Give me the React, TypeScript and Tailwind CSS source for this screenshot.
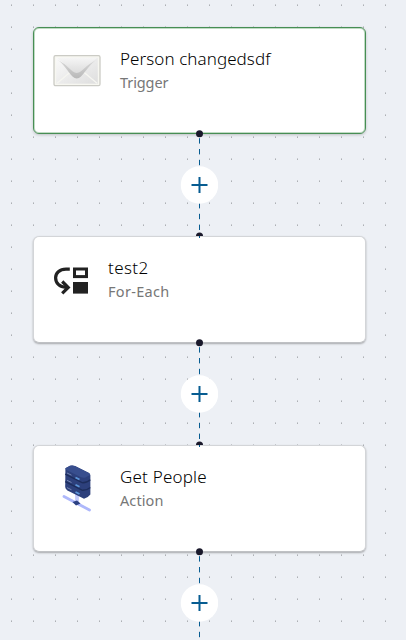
import type { ReactNode } from 'react';

function Envelope() {
  return (
    <svg width="48" height="48" viewBox="0 0 48 48" className="shrink-0">
      <defs>
        <linearGradient id="paper" x1="0" y1="0" x2="1" y2="1">
          <stop offset="0" stopColor="#fafafa" />
          <stop offset="1" stopColor="#dedede" />
        </linearGradient>
        <linearGradient id="flap" x1="0" y1="0" x2="0" y2="1">
          <stop offset="0" stopColor="#f5f5f5" />
          <stop offset="1" stopColor="#dcdcdc" />
        </linearGradient>
        <linearGradient id="shade" x1="0" y1="0" x2="0" y2="1">
          <stop offset="0" stopColor="#dadada" />
          <stop offset="1" stopColor="#b8b8b8" />
        </linearGradient>
      </defs>
      <rect x="1" y="8.7" width="46" height="30" rx="1.5" fill="#f7f7f1" stroke="#cbcbc5" strokeWidth="1.3" />
      <rect x="3.2" y="10.7" width="41.6" height="26" fill="url(#paper)" />
      <path d="M4 36.2L18 24.5M44 36.2L30 24.5" stroke="#f6f6f1" strokeWidth="1.4" />
      <path d="M4 12.5C11 17 14.5 24 19.5 29.5Q23.8 33.5 28 29.5C33 24 37 17 44 12.5L28 22H20Z" fill="url(#shade)" />
      <path d="M4 11H44C38 15 33 20 28 24.2Q23.8 27.7 19.5 24.2C14.5 20 10 15 4 11Z" fill="url(#flap)" />
    </svg>
  );
}

function LoopIcon() {
  return (
    <svg width="36" height="36" viewBox="0 0 36 36" fill="none" stroke="#222" className="shrink-0">
      <path d="M16.8 7.2H13C6.4 7.2 2.6 11 2.6 15.8C2.6 21 6.4 25.1 13 25.4" strokeWidth="3.2" />
      <path d="M9.2 19.5L15.2 25.4L9.2 31.3" strokeWidth="3.2" />
      <rect x="21.5" y="7" width="12" height="7.6" strokeWidth="3" />
      <rect x="20" y="20" width="15" height="11.6" fill="#222" stroke="none" />
    </svg>
  );
}

function ServerIcon() {
  return (
    <svg width="48" height="48" viewBox="0 0 48 48" className="shrink-0">
      <path d="M11 31.5L36.5 45" stroke="#aeb8fb" strokeWidth="2.8" strokeLinecap="round" />
      <path d="M24 29V38" stroke="#c4cbfb" strokeWidth="3.8" />
      <path d="M19.5 37L24 35.5L27.5 38.5L23 40.5Z" fill="#2c4182" />
      <path d="M12.4 3.2L17 .8Q19.3 0 22 1L36 8Q37.4 9 37.4 10.5V29.5Q35 32.8 31 33.7L14.4 25.4Q12.2 24 12.2 22Z" fill="#2d407c" />
      <path d="M12.4 3.2L17 .8Q19.3 0 22 1L36 8Q37.4 9 37 10L32.5 12.5Q30 13.3 27.5 12L13 4.8Z" fill="#384e8e" />
      <path d="M12.3 9.2L29 17.7Q34 18 37.3 14.8M12.3 16.7L29 25.2Q34 25.5 37.3 22.5" fill="none" stroke="#1d2d5c" strokeWidth="1.3" />
      <path d="M14 8L18.5 10.2M14 15.3L18.5 17.5M14 22.6L18.5 24.8" stroke="#7484b0" strokeWidth="1" />
      <path d="M22.5 12.5L26.5 14.5M22.5 19.8L26.5 21.8M22.5 27.1L26.5 29.1" stroke="#5d97da" strokeWidth="1.7" />
    </svg>
  );
}

interface StepProps {
  icon: ReactNode;
  title: string;
  kind: string;
  titleClass: string;
  kindClass: string;
  trigger?: boolean;
}

function Step({ icon, title, kind, titleClass, kindClass, trigger }: StepProps) {
  const frame = trigger
    ? 'border-[#478e54] shadow-[inset_0_0_0_1px_#c0dbc4,0_1px_3px_rgba(0,0,0,0.2)]'
    : 'border-[#d3d5d8] border-b-[#bfc1c4] shadow-[0_1px_2px_rgba(0,0,0,0.3)]';
  return (
    <div className={`h-[107px] w-[333px] shrink-0 rounded-md border bg-white pt-[19px] pl-[19px] ${frame}`}>
      <div className="flex h-12 items-start gap-[19px]">
        <div className="flex h-12 items-center">{icon}</div>
        <div className="flex flex-col">
          <div className={`h-[23px] text-[17px] leading-6 font-light whitespace-nowrap text-black ${titleClass}`}>{title}</div>
          <div className={`h-6 text-[14.5px] leading-6 font-normal whitespace-nowrap text-[#777] ${kindClass}`}>{kind}</div>
        </div>
      </div>
    </div>
  );
}

function Connector({ last }: { last?: boolean }) {
  return (
    <div className="relative flex h-[102px] w-[333px] shrink-0 items-center justify-center">
      <svg width="38" height="110" viewBox="0 0 38 110" className="absolute top-[-4px] left-[147px]">
        <path d="M19.5 8V108" stroke="#075c91" strokeWidth="1" strokeDasharray="5.4 5.4" strokeDashoffset="-0.2" />
        <circle cx="19.5" cy="3.7" r="3.5" fill="#1a192b" />
        {!last && <path d="M16 106A3.5 3.5 0 0 1 23 106Z" fill="#1a192b" />}
        <circle cx="19.5" cy="55" r="18.7" fill="#fff" />
        <path d="M11.5 55H27.5M19.5 47V63" stroke="#075c91" strokeWidth="2" />
      </svg>
    </div>
  );
}

export default function App() {
  return (
    <main className="relative h-[640px] w-[406px] overflow-hidden bg-[#edf0f5] font-['Noto_Sans','Open_Sans',sans-serif]">
      <svg width="406" height="640" className="absolute inset-0">
        <defs>
          <pattern id="dots" width="22" height="22" patternUnits="userSpaceOnUse">
            <rect x="11" y="4" width="1" height="1" fill="#c7cacf" />
            <rect x="11" y="5" width="1" height="1" fill="#adb0b4" />
          </pattern>
        </defs>
        <rect width="406" height="640" fill="url(#dots)" />
      </svg>
      <div className="relative flex flex-col items-start pt-[27px] pl-[33px]">
        <Step icon={<Envelope />} title="Person changedsdf" kind="Trigger" titleClass="tracking-[0.07px]" kindClass="tracking-[-0.1px]" trigger />
        <Connector />
        <Step icon={<LoopIcon />} title="test2" kind="For-Each" titleClass="tracking-[0.4px]" kindClass="tracking-[0.3px]" />
        <Connector />
        <Step icon={<ServerIcon />} title="Get People" kind="Action" titleClass="tracking-[0.2px]" kindClass="tracking-[0.1px]" />
        <Connector last />
      </div>
    </main>
  );
}
